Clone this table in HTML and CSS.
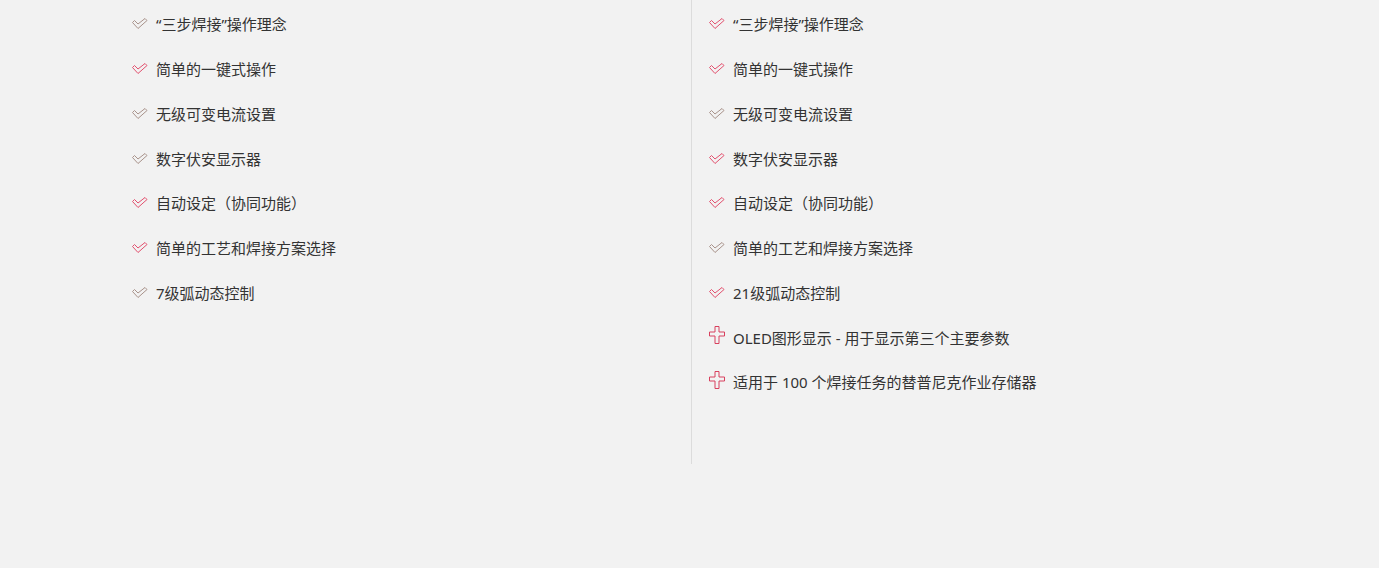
FILE: index.html
```html
<!DOCTYPE html>
<html lang="zh">
<head>
<meta charset="utf-8">
<link rel="stylesheet" href="styles.css">
<title>Features</title>
</head>
<body>
<div class="wrap">
  <div class="col col-left">
    <ul class="list">
      <li><svg class="ico chk grey" viewBox="0 0 16 12"><polygon points="0.5,4.5 2.5,2.5 6,6 13,0.5 15,2.5 6,10.5"/></svg><span>“三步焊接”操作理念</span></li>
      <li><svg class="ico chk red" viewBox="0 0 16 12"><polygon points="0.5,4.5 2.5,2.5 6,6 13,0.5 15,2.5 6,10.5"/></svg><span>简单的一键式操作</span></li>
      <li><svg class="ico chk grey" viewBox="0 0 16 12"><polygon points="0.5,4.5 2.5,2.5 6,6 13,0.5 15,2.5 6,10.5"/></svg><span>无级可变电流设置</span></li>
      <li><svg class="ico chk grey" viewBox="0 0 16 12"><polygon points="0.5,4.5 2.5,2.5 6,6 13,0.5 15,2.5 6,10.5"/></svg><span>数字伏安显示器</span></li>
      <li><svg class="ico chk red" viewBox="0 0 16 12"><polygon points="0.5,4.5 2.5,2.5 6,6 13,0.5 15,2.5 6,10.5"/></svg><span>自动设定（协同功能）</span></li>
      <li><svg class="ico chk red" viewBox="0 0 16 12"><polygon points="0.5,4.5 2.5,2.5 6,6 13,0.5 15,2.5 6,10.5"/></svg><span>简单的工艺和焊接方案选择</span></li>
      <li><svg class="ico chk grey" viewBox="0 0 16 12"><polygon points="0.5,4.5 2.5,2.5 6,6 13,0.5 15,2.5 6,10.5"/></svg><span>7级弧动态控制</span></li>
    </ul>
  </div>
  <div class="col col-right">
    <ul class="list">
      <li><svg class="ico chk red" viewBox="0 0 16 12"><polygon points="0.5,4.5 2.5,2.5 6,6 13,0.5 15,2.5 6,10.5"/></svg><span>“三步焊接”操作理念</span></li>
      <li><svg class="ico chk red" viewBox="0 0 16 12"><polygon points="0.5,4.5 2.5,2.5 6,6 13,0.5 15,2.5 6,10.5"/></svg><span>简单的一键式操作</span></li>
      <li><svg class="ico chk grey" viewBox="0 0 16 12"><polygon points="0.5,4.5 2.5,2.5 6,6 13,0.5 15,2.5 6,10.5"/></svg><span>无级可变电流设置</span></li>
      <li><svg class="ico chk red" viewBox="0 0 16 12"><polygon points="0.5,4.5 2.5,2.5 6,6 13,0.5 15,2.5 6,10.5"/></svg><span>数字伏安显示器</span></li>
      <li><svg class="ico chk red" viewBox="0 0 16 12"><polygon points="0.5,4.5 2.5,2.5 6,6 13,0.5 15,2.5 6,10.5"/></svg><span>自动设定（协同功能）</span></li>
      <li><svg class="ico chk grey" viewBox="0 0 16 12"><polygon points="0.5,4.5 2.5,2.5 6,6 13,0.5 15,2.5 6,10.5"/></svg><span>简单的工艺和焊接方案选择</span></li>
      <li><svg class="ico chk red" viewBox="0 0 16 12"><polygon points="0.5,4.5 2.5,2.5 6,6 13,0.5 15,2.5 6,10.5"/></svg><span>21级弧动态控制</span></li>
      <li class="plus-row"><svg class="ico plus" viewBox="0 0 16 18"><polygon points="6,0.5 10,0.5 10,6 15.5,6 15.5,10 10,10 10,17.5 6,17.5 6,10 0.5,10 0.5,6 6,6"/></svg><span>OLED图形显示 - 用于显示第三个主要参数</span></li>
      <li class="plus-row"><svg class="ico plus" viewBox="0 0 16 18"><polygon points="6,0.5 10,0.5 10,6 15.5,6 15.5,10 10,10 10,17.5 6,17.5 6,10 0.5,10 0.5,6 6,6"/></svg><span>适用于 100 个焊接任务的替普尼克作业存储器</span></li>
    </ul>
  </div>
</div>
</body>
</html>
```

FILE: styles.css
```css
html, body {
  margin: 0;
  padding: 0;
  background: #f2f2f2;
}
body {
  font-family: "Noto Sans", "Noto Sans CJK SC", sans-serif;
  font-size: 15px;
  color: #333;
}
.wrap {
  display: flex;
  margin-left: 115px;
}
.col {
  flex: none;
  box-sizing: border-box;
  width: 577px;
  padding: 2px 0 59px 17px;
}
.col-left {
  border-right: 1px solid #dcdcdc;
}
.list {
  list-style: none;
  margin: 0;
  padding: 0;
}
.list li {
  height: 44.75px;
  display: flex;
  align-items: center;
}
.ico {
  flex: none;
  width: 16px;
  height: 12px;
  margin-right: 8px;
  fill: none;
  stroke-width: 1;
}
.chk.grey { stroke: #a8928a; }
.chk.red { stroke: #e2506e; }
.plus {
  width: 16px;
  height: 18px;
  stroke: #d8405e;
  margin-top: -5px;
}
.list span {
  line-height: 20px;
}
```
